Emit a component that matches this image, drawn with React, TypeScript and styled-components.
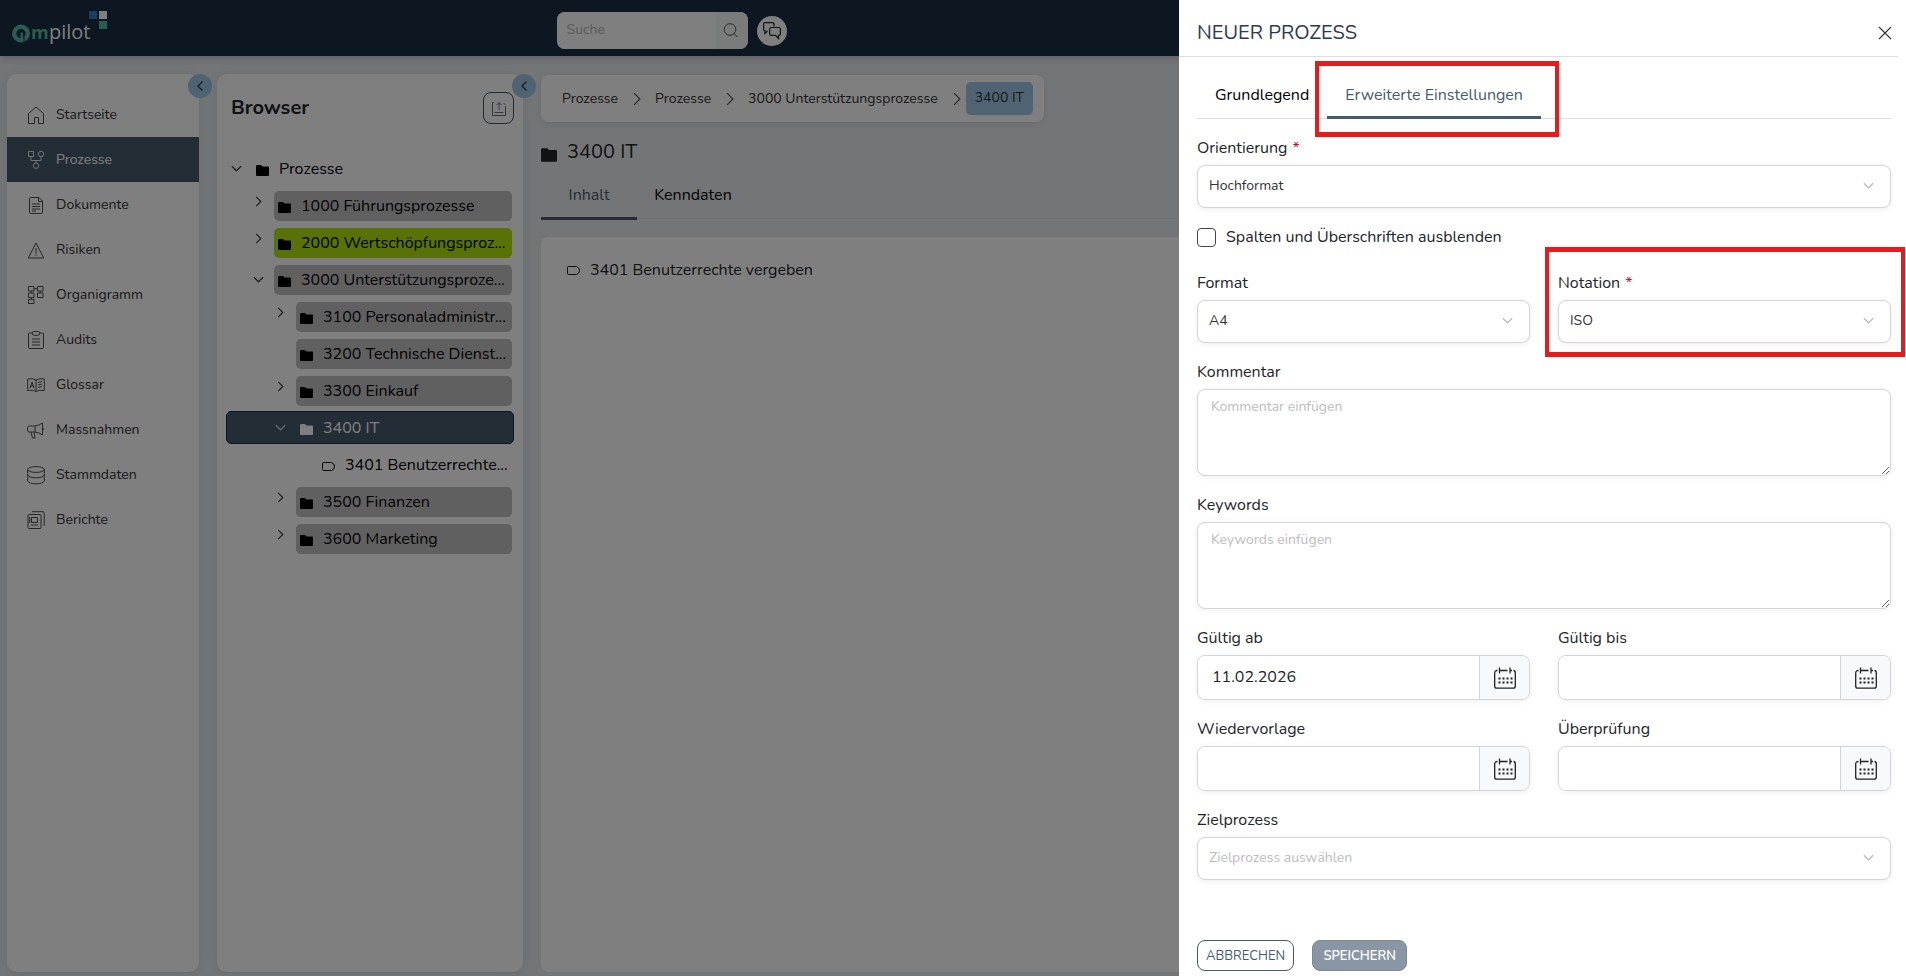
import React from "react";
import styled, { createGlobalStyle, css } from "styled-components";

const GlobalStyle = createGlobalStyle`
  *, *::before, *::after { box-sizing: border-box; }
  body { margin: 0; background: #e9ebee; color: #212529; overflow: hidden;
    font-family: Nunito, Lato, "Open Sans", sans-serif; font-size: 16px; line-height: 24px; }
  button, input, select, textarea { font: inherit; color: inherit; }
  button { background: none; border: 0; padding: 0; }
  a { color: inherit; text-decoration: none; }
  ul { list-style: none; margin: 0; padding: 0; }
  h1, h2 { margin: 0; font-weight: 400; }
`;

const Page = styled.div`
  min-height: 100vh;
  display: flex;
  flex-direction: column;
`;

const TopBar = styled.header`
  height: 56px;
  flex: none;
  display: grid;
  grid-template-columns: 29.2% 1fr;
  background: #182e45;
  box-shadow: 0 2px 8px rgba(0, 0, 0, 0.2);
`;

const Logo = styled.a`
  padding: 8px 12px;
  height: 48px;
`;

const HeaderTools = styled.div`
  display: flex;
  align-items: center;
  gap: 9px;
  padding-top: 5px;
`;

const SearchBox = styled.form`
  display: flex;
  width: 191px;
  height: 37px;
  background: #fff;
  border-radius: 8px;
  overflow: hidden;
`;

const SearchInput = styled.input`
  flex: 1;
  min-width: 0;
  border: 0;
  background: #fff;
  padding: 0 10px 2px;
  font-size: 14px;
  &::placeholder { color: #b4b4b4; }
`;

const SearchButton = styled.button`
  width: 32px;
  padding-right: 3px;
  background: #f5f8f9;
  display: grid;
  place-items: center;
  color: #555;
`;

const ChatButton = styled.button`
  width: 30px;
  height: 30px;
  border-radius: 50%;
  background: #fff;
  display: grid;
  place-items: center;
`;

const Workspace = styled.div`
  flex: 1;
  display: flex;
  gap: 18px;
  padding: 18px 7px 4px;
`;

const Panel = styled.section<{ $width: number }>`
  position: relative;
  flex: none;
  width: ${(p) => p.$width}px;
  background: #fff;
  border-radius: 10px;
  box-shadow: 0 2px 12px rgba(60, 70, 100, 0.14);
`;

const CollapseButton = styled.button`
  position: absolute;
  top: 0;
  right: -13px;
  width: 24px;
  height: 24px;
  border-radius: 50%;
  background: #9ec6e6;
  color: #24405c;
  display: grid;
  place-items: center;
`;

const NavList = styled.ul`
  padding-top: 18px;
`;

const NavLink = styled.a<{ $active?: boolean }>`
  display: flex;
  align-items: center;
  gap: 10px;
  height: 45px;
  padding-left: 19px;
  font-size: 14px;
  color: ${(p) => (p.$active ? "#fff" : "#333")};
  background: ${(p) => (p.$active ? "#465a6c" : "none")};
  svg { flex: none; opacity: 0.85; }
`;

const BrowserHead = styled.div`
  display: flex;
  justify-content: space-between;
  align-items: center;
  padding: 18px 9px 0 14px;
  margin-bottom: 28px;
`;

const BrowserTitle = styled.h2`
  font-size: 20px;
  font-weight: 700;
  line-height: 32px;
`;

const ExportButton = styled.button`
  width: 31px;
  height: 32px;
  border: 1px solid #3b5268;
  border-radius: 8px;
  display: grid;
  place-items: center;
  color: #3b5268;
`;

const TreeRow = styled.li<{ $depth: number; $selected?: boolean }>`
  display: flex;
  align-items: center;
  height: 33px;
  margin: 4px 9px;
  padding-left: ${(p) => p.$depth * 22}px;
  padding-right: 1px;
  border: 1px solid transparent;
  color: #000;
  ${(p) =>
    p.$selected &&
    css`
      background: #465a6c;
      border-color: #182e45;
      border-radius: 5px;
      color: #fff;
    `}
`;

const Toggle = styled.button<{ $open?: boolean }>`
  flex: none;
  width: 25px;
  height: 30px;
  padding: ${(p) => (p.$open ? "0 6px 0 0" : "0 6px 8px 0")};
  display: grid;
  place-items: center;
  color: inherit;
  opacity: 0.75;
`;

const ToggleSpace = styled.span`
  flex: none;
  width: 25px;
`;

const tints: Record<string, string> = { grey: "#c1c1c1", green: "#b2e410", none: "transparent" };

const TreeLabel = styled.button<{ $tint: string }>`
  flex: 1;
  min-width: 0;
  height: 30px;
  display: flex;
  align-items: center;
  gap: 10px;
  padding-left: 4px;
  border-radius: 5px;
  background: ${(p) => tints[p.$tint]};
  white-space: nowrap;
  color: inherit;
  svg { flex: none; margin-top: 3px; }
`;

const Main = styled.main`
  flex: 1;
  min-width: 0;
  display: flex;
  flex-direction: column;
`;

const Breadcrumbs = styled.nav`
  align-self: flex-start;
  display: flex;
  align-items: center;
  height: 47px;
  margin-top: 1px;
  padding: 0 11px 0 21px;
  border-radius: 8px;
  background: #fff;
  box-shadow: 0 2px 8px rgba(60, 70, 100, 0.12);
  font-size: 14px;
  color: #333;
  svg { color: #555; margin: 0 11px 0 12px; }
`;

const CurrentCrumb = styled.a`
  height: 33px;
  line-height: 32px;
  padding: 0 9px;
  margin-left: -9px;
  border-radius: 5px;
  background: #9ec6e6;
`;

const PageTitle = styled.h1`
  display: flex;
  align-items: center;
  gap: 10px;
  margin-top: 15px;
  font-size: 20px;
  line-height: 30px;
  svg { margin-top: 6px; }
`;

const TabBar = styled.div`
  display: flex;
  border-bottom: 1px solid #dcdfe4;
`;

const Tab = styled.button<{ $active?: boolean }>`
  position: relative;
  border-bottom: 3px solid ${(p) => (p.$active ? "#465a6c" : "transparent")};
  color: ${(p) => (p.$active ? "#465a6c" : "#000")};
  white-space: nowrap;
`;

const MainTabs = styled(TabBar)`
  margin-top: 1px;
  ${Tab} { width: 96px; height: 52px; padding-top: 5px; margin: 0 8px -2px 0; }
`;

const ContentCard = styled.div`
  flex: 1;
  margin-top: 18px;
  padding: 19px 26px;
  background: #fff;
  border-radius: 8px;
`;

const ContentLink = styled.a`
  display: flex;
  align-items: center;
  gap: 10px;
  height: 28px;
`;

const Backdrop = styled.div`
  position: fixed;
  inset: 0;
  background: rgba(0, 0, 0, 0.5);
`;

const Drawer = styled.aside`
  position: fixed;
  top: 0;
  right: 0;
  bottom: 0;
  width: min(727px, 100vw);
  display: flex;
  flex-direction: column;
  background: #fff;
  overflow: hidden;
`;

const DrawerHead = styled.div`
  flex: none;
  display: flex;
  align-items: center;
  justify-content: space-between;
  height: 57px;
  margin-right: 8px;
  padding: 10px 5px 0 18px;
  border-bottom: 1px solid #dcdfe4;
`;

const DrawerTitle = styled.h2`
  font-size: 20px;
  color: #2e3a52;
`;

const CloseButton = styled.button`
  display: grid;
  place-items: center;
  width: 16px;
  height: 24px;
  color: #333;
`;

const DrawerTabs = styled(TabBar)`
  flex: none;
  height: 62px;
  margin: 0 15px 0 18px;
  ${Tab} { height: 62px; padding: 21px 18px 4px; }
`;

const Highlight = styled.span<{ $inset: string }>`
  position: absolute;
  inset: ${(p) => p.$inset};
  border: solid #e81a1c;
  border-width: 5px 4px;
  pointer-events: none;
`;

const Form = styled.form`
  flex: 1;
  display: grid;
  grid-template-columns: 1fr 1fr;
  align-content: start;
  gap: 17px 28px;
  padding: 17px 15px 0 18px;
`;

const Field = styled.div<{ $wide?: boolean }>`
  position: relative;
  min-width: 0;
  display: flex;
  flex-direction: column;
  gap: 5px;
  grid-column: ${(p) => (p.$wide ? "1 / -1" : "auto")};
`;

const FieldLabel = styled.label`
  color: #212529;
`;

const Required = styled.span`
  color: #c8102e;
  margin-left: 5px;
`;

const box = css`
  width: 100%;
  border: 1px solid #d3d5d6;
  border-radius: 8px;
  background: #fff;
  box-shadow: 0 1px 6px rgba(0, 0, 0, 0.07);
  outline: 0;
`;

const SelectWrap = styled.div`
  position: relative;
  svg { position: absolute; right: 17px; top: 15px; pointer-events: none; color: #bcbcbc; }
`;

const Select = styled.select<{ $empty?: boolean }>`
  ${box}
  display: block;
  appearance: none;
  height: 43px;
  padding: 0 36px 2px 11px;
  font-size: 14px;
  color: ${(p) => (p.$empty ? "#bdbdbd" : "#333")};
`;

const TextArea = styled.textarea`
  ${box}
  display: block;
  height: 87px;
  padding: 5px 13px;
  font-size: 14px;
  resize: vertical;
  &::placeholder { color: #bdbdbd; }
`;

const CheckRow = styled.label`
  grid-column: 1 / -1;
  display: flex;
  align-items: flex-start;
  gap: 10px;
  height: 29px;
`;

const CheckBox = styled.input`
  appearance: none;
  width: 19px;
  height: 19px;
  margin: 3px 0 0;
  border: 1px solid #444;
  border-radius: 4px;
  background: #fff;
`;

const DateBox = styled.div`
  ${box}
  display: flex;
  height: 45px;
  overflow: hidden;
`;

const DateInput = styled.input`
  flex: 1;
  min-width: 0;
  border: 0;
  border-right: 1px solid #d3d5d6;
  padding: 0 14px 2px;
  outline: 0;
`;

const DateButton = styled.button`
  width: 49px;
  background: #f8f9fb;
  display: grid;
  place-items: center;
`;

const Actions = styled.div`
  flex: none;
  display: flex;
  gap: 18px;
  padding: 0 18px 5px;
`;

const ActionButton = styled.button<{ $primary?: boolean }>`
  height: 31px;
  min-width: 95px;
  padding: 0 8px;
  border: 1px solid ${(p) => (p.$primary ? "#7b8998" : "#465a6c")};
  border-radius: 8px;
  background: ${(p) => (p.$primary ? "#8a96a3" : "#fff")};
  color: ${(p) => (p.$primary ? "#fff" : "#465a6c")};
  font-size: 13px;
  font-weight: ${(p) => (p.$primary ? 600 : 400)};
`;

const Chevron = ({ dir, size = 12, weight = 1.4 }: { dir: "left" | "right" | "down"; size?: number; weight?: number }) => (
  <svg width={size} height={size} viewBox="0 0 12 12" fill="none" stroke="currentColor" strokeWidth={weight} aria-hidden>
    <path d={{ left: "M8.5 1.5 4 6l4.500 4.500", right: "M3.500 1 8.500 6l-5 5", down: "M1 3.500 6 8.500l5-5" }[dir]} />
  </svg>
);

const Folder = ({ width = 13 }: { width?: number }) => (
  <svg width={width} height={width - 2} viewBox="0 0 13 11" fill="currentColor" aria-hidden>
    <path d="M0 1a1 1 0 0 1 1-1h4l1.500 1.500H12a1 1 0 0 1 1 1V10a1 1 0 0 1-1 1H1a1 1 0 0 1-1-1z" />
  </svg>
);

const ProcessShape = () => (
  <svg width="13" height="9" viewBox="0 0 13 9" fill="none" stroke="currentColor" aria-hidden>
    <path d="M1.500.5H9.500Q12.500 1.500 12.500 4.500T9.500 8.500H1.500Q.5 8.500.5 7.500V1.500Q.5.5 1.500.5Z" />
  </svg>
);

const Calendar = () => (
  <svg width="22" height="22" viewBox="0 0 22 22" fill="none" stroke="#222" strokeWidth="1.3" aria-hidden>
    <path d="M3.500 3.500Q.7 3.500.7 6V19Q.7 21.200 2.700 21.200H19.300Q21.300 21.200 21.300 19V6Q21.300 3.500 19.500 3.500M5.500 3.500H13.500M5.500.5V6.500M16 .5V6.500M16 3.500H18" />
    <path strokeWidth="2" strokeDasharray="2 2" d="M4.500 11.500H18.500M4.500 15.500H18.500" />
  </svg>
);

const navIcons: Record<string, React.ReactNode> = {
  Startseite: <path d="M1.500 17.500V7.500L9 1l7.500 6.500v10h-5v-6h-4v6z" />,
  Prozesse: (
    <>
      <path d="M1.500.5h5v5h-5zM4 5.500v4h10v-4M9 9.500v2.500" />
      <circle cx="14" cy="3" r="2.700" />
      <circle cx="9" cy="14.700" r="2.700" />
    </>
  ),
  Dokumente: <path d="M3.500 1.500H12l3.500 3.500v11.500q0 1-1 1h-11q-1 0-1-1v-14q0-1 1-1zM11.500 1.500V5.500h4M5 8h8M5 10.500h8M5 13h8M5 15h4" />,
  Risiken: <path d="M9 2 16.700 17H1.300zM9 7v5.500M9 13.700v1.300" />,
  Organigramm: <path d="M1.500.5h5.500v4.500H1.500zM10.500.5h5.500v4.500h-5.500zM1.500 7h5.500v4.500H1.500zM10.500 7h5.500v4.500h-5.500zM1.500 13.500h5.500v4h-5.500zM4.200 5v2M13.200 5v2M4.200 11.500v2M7 2.700h3.500" />,
  Audits: <path d="M5 2H2.500q-1 0-1 1v13.500q0 1 1 1h13q1 0 1-1V3q0-1-1-1H13M5.500 3.500V1.500q0-1 1-1h5q1 0 1 1v2q-1.500 1-3.500 1t-3.500-1zM5 8h8M5 11h8M5 14h8" />,
  Glossar: <path d="M9 4Q6 2 .7 3v11.500Q6 13.500 9 15.500q3-2 8.300-1V3Q12 2 9 4v11.500M3 12l2-6 2 6M3.700 10h2.600M11 6.500l4-1M11 9l4-1M11 11.500l4-1" />,
  Massnahmen: <path d="M2.500 5H8q4-.5 7.500-3v12Q12 11.500 8 11H2.500Q.5 11 .5 9V7Q.5 5 2.500 5zM8 5v6M4 11l1.500 6H8l-1-6M15.500 6.500q2.200 1.500 0 3" />,
  Stammdaten: (
    <>
      <ellipse cx="9" cy="3.500" rx="8.300" ry="2.900" />
      <path d="M.7 3.500v11.500q1.500 2.800 8.300 2.800t8.300-2.800V3.500M.7 9q1.500 2.800 8.300 2.800T17.300 9" />
    </>
  ),
  Berichte: <path d="M2 3.500h11q1 0 1 1v12q0 1-1 1H2q-1 0-1-1v-12q0-1 1-1zM5 .7h11q1.200 0 1.200 1.200v13M4.500 6.500h6v5h-6zM4 14h7M2.800 6v6" />,
};

const tree = [
  { depth: 0, text: "Prozesse", tint: "none", open: true },
  { depth: 1, text: "1000 Führungsprozesse", tint: "grey", open: false },
  { depth: 1, text: "2000 Wertschöpfungsproz...", tint: "green", open: false },
  { depth: 1, text: "3000 Unterstützungsproze...", tint: "grey", open: true },
  { depth: 2, text: "3100 Personaladministr...", tint: "grey", open: false },
  { depth: 2, text: "3200 Technische Dienst...", tint: "grey" },
  { depth: 2, text: "3300 Einkauf", tint: "grey", open: false },
  { depth: 2, text: "3400 IT", tint: "none", open: true, selected: true },
  { depth: 3, text: "3401 Benutzerrechte...", tint: "none", leaf: true },
  { depth: 2, text: "3500 Finanzen", tint: "grey", open: false },
  { depth: 2, text: "3600 Marketing", tint: "grey", open: false },
];

const SelectField = ({ id, label, value, wide, required, empty, marked }: {
  id: string; label: string; value: string; wide?: boolean; required?: boolean; empty?: boolean; marked?: boolean;
}) => (
  <Field $wide={wide}>
    <FieldLabel htmlFor={id}>{label}{required && <Required>*</Required>}</FieldLabel>
    <SelectWrap>
      <Select id={id} $empty={empty}><option>{value}</option></Select>
      <Chevron dir="down" size={11} />
    </SelectWrap>
    {marked && <Highlight $inset="-24px -14px -14px -13px" />}
  </Field>
);

const DateField = ({ id, label, value }: { id: string; label: string; value?: string }) => (
  <Field>
    <FieldLabel htmlFor={id}>{label}</FieldLabel>
    <DateBox>
      <DateInput id={id} type="text" defaultValue={value} />
      <DateButton type="button" aria-label={`${label} auswählen`}><Calendar /></DateButton>
    </DateBox>
  </Field>
);

const NoteField = ({ id, label, hint }: { id: string; label: string; hint: string }) => (
  <Field $wide>
    <FieldLabel htmlFor={id}>{label}</FieldLabel>
    <TextArea id={id} placeholder={hint} />
  </Field>
);

export default function App() {
  return (
    <>
      <GlobalStyle />
      <Page>
        <TopBar>
          <Logo href="#" aria-label="qmpilot">
            <svg width="98" height="36" viewBox="0 0 98 36" aria-hidden>
              <circle cx="9" cy="25.500" r="6.800" fill="none" stroke="#57b8a4" strokeWidth="4.400" />
              <path d="M9.800 24.500v9" stroke="#57b8a4" strokeWidth="2.500" />
              <path d="M12 29v6" stroke="#182e45" />
              <text x="19" y="31" fontFamily="Open Sans" fontWeight="700" fontSize="18" fill="#57b8a4">m</text>
              <text x="37" y="31" fontFamily="Open Sans" fontWeight="500" fontSize="20" fill="#fff">pilot</text>
              <path d="M77 3h8v8h-8z" fill="#2f80c0" />
              <path d="M87 3h8v8h-8z" fill="#fff" />
              <path d="M87 13h8v8h-8z" fill="#57b8a4" />
            </svg>
          </Logo>
          <HeaderTools>
            <SearchBox>
              <SearchInput aria-label="Suche" placeholder="Suche" />
              <SearchButton type="button" aria-label="Suchen">
                <svg width="15" height="15" viewBox="0 0 15 15" fill="none" stroke="currentColor"><circle cx="7" cy="6.500" r="5.800" /><path d="m11 10.500 3.500 3.500" /></svg>
              </SearchButton>
            </SearchBox>
            <ChatButton aria-label="Chat">
              <svg width="18" height="18" viewBox="0 0 18 18" fill="none" stroke="#222" strokeWidth="1.200"><path d="M11 4.500V2Q11 .7 9.700.7H2Q.7.700.7 2V7.500Q.7 8.800 2 8.800V11.500L4.500 8.800M8 5.500H16Q17.300 5.500 17.300 6.800V12Q17.300 13.300 16 13.300H15.500V16.500L12.500 13.300H8Q6.700 13.300 6.700 12V6.800Q6.700 5.500 8 5.500Z" /></svg>
            </ChatButton>
          </HeaderTools>
        </TopBar>
        <Workspace>
          <Panel $width={192}>
            <CollapseButton aria-label="Menü einklappen"><Chevron dir="left" /></CollapseButton>
            <NavList>
              {Object.keys(navIcons).map((name) => (
                <li key={name}>
                  <NavLink href="#" $active={name === "Prozesse"}>
                    <svg width="20" height="20" viewBox="-1 -1 20 20" fill="none" stroke="currentColor" aria-hidden>{navIcons[name]}</svg>
                    {name}
                  </NavLink>
                </li>
              ))}
            </NavList>
          </Panel>
          <Panel $width={306}>
            <CollapseButton aria-label="Browser einklappen"><Chevron dir="left" /></CollapseButton>
            <BrowserHead>
              <BrowserTitle>Browser</BrowserTitle>
              <ExportButton aria-label="Exportieren">
                <svg width="14" height="15" viewBox="0 0 14 15" fill="none" stroke="currentColor" strokeWidth=".8"><path d="M2 1.500H.5V14.500H13.500V5M13.500 3.500 11.500 2.500M7 9V1.500M4.500 4 7 1.500 9.500 4M2.500 11.500H11.500" /></svg>
              </ExportButton>
            </BrowserHead>
            <ul>
              {tree.map((n) => (
                <TreeRow key={n.text} $depth={n.depth} $selected={n.selected}>
                  {n.open === undefined ? <ToggleSpace /> : (
                    <Toggle $open={n.open} aria-expanded={n.open} aria-label={n.text}>
                      <Chevron dir={n.open ? "down" : "right"} size={11} weight={1.300} />
                    </Toggle>
                  )}
                  <TreeLabel $tint={n.tint}>{n.leaf ? <ProcessShape /> : <Folder />}{n.text}</TreeLabel>
                </TreeRow>
              ))}
            </ul>
          </Panel>
          <Main>
            <Breadcrumbs aria-label="Pfad">
              <a href="#">Prozesse</a><Chevron dir="right" size={14} weight={1} />
              <a href="#">Prozesse</a><Chevron dir="right" size={14} weight={1} />
              <a href="#">3000 Unterstützungsprozesse</a><Chevron dir="right" size={14} weight={1} />
              <CurrentCrumb href="#">3400 IT</CurrentCrumb>
            </Breadcrumbs>
            <PageTitle><Folder width={16} />3400 IT</PageTitle>
            <MainTabs>
              <Tab $active>Inhalt</Tab>
              <Tab>Kenndaten</Tab>
            </MainTabs>
            <ContentCard>
              <ContentLink href="#"><ProcessShape />3401 Benutzerrechte vergeben</ContentLink>
            </ContentCard>
          </Main>
        </Workspace>
      </Page>
      <Backdrop />
      <Drawer role="dialog" aria-labelledby="drawer-title">
        <DrawerHead>
          <DrawerTitle id="drawer-title">NEUER PROZESS</DrawerTitle>
          <CloseButton aria-label="Schliessen">
            <svg width="14" height="14" viewBox="0 0 14 14" stroke="currentColor" strokeWidth="1.100"><path d="m1 1 12 12M13 1 1 13" /></svg>
          </CloseButton>
        </DrawerHead>
        <DrawerTabs>
          <Tab>Grundlegend</Tab>
          <Tab $active>
            Erweiterte Einstellungen
            <Highlight $inset="4px -18px -21px -12px" />
          </Tab>
        </DrawerTabs>
        <Form>
          <SelectField id="orientation" label="Orientierung" value="Hochformat" wide required />
          <CheckRow><CheckBox type="checkbox" />Spalten und Überschriften ausblenden</CheckRow>
          <SelectField id="format" label="Format" value="A4" />
          <SelectField id="notation" label="Notation" value="ISO" required marked />
          <NoteField id="comment" label="Kommentar" hint="Kommentar einfügen" />
          <NoteField id="keywords" label="Keywords" hint="Keywords einfügen" />
          <DateField id="valid-from" label="Gültig ab" value="11.02.2026" />
          <DateField id="valid-to" label="Gültig bis" />
          <DateField id="resubmission" label="Wiedervorlage" />
          <DateField id="review" label="Überprüfung" />
          <SelectField id="target" label="Zielprozess" value="Zielprozess auswählen" wide empty />
        </Form>
        <Actions>
          <ActionButton>ABBRECHEN</ActionButton>
          <ActionButton $primary>SPEICHERN</ActionButton>
        </Actions>
      </Drawer>
    </>
  );
}
